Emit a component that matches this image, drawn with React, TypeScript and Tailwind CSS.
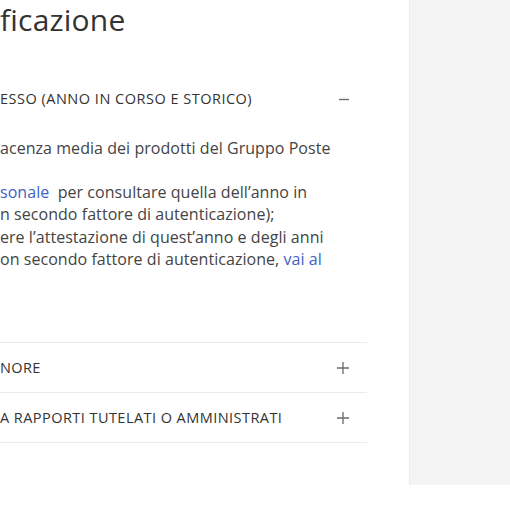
const font = { fontFamily: '"Open Sans", "Liberation Sans", sans-serif' };

function Minus() {
  return (
    <svg width="12" height="12" viewBox="0 0 12 12" className="shrink-0">
      <path d="M1 6.5h10" stroke="#6b6b6b" strokeWidth="1.4" />
    </svg>
  );
}

function Plus() {
  return (
    <svg width="14" height="14" viewBox="0 0 14 14" className="shrink-0">
      <path d="M1 7h12M7 1v12" stroke="#6b6b6b" strokeWidth="1.3" />
    </svg>
  );
}

export default function App() {
  return (
    <div className="flex w-[510px] h-[510px] bg-white overflow-hidden" style={font}>
      <div className="w-[409px] shrink-0 pr-[42px]">
        <h1 className="text-[30px] leading-[40px] text-[#333] font-normal tracking-[0.2px]">ficazione</h1>

        <div className="mt-[34px]">
          <div className="flex items-center justify-between h-[50px] pr-[17px]">
            <span className="text-[14.5px] text-[#333] tracking-[0.5px]">ESSO (ANNO IN CORSO E STORICO)</span>
            <Minus />
          </div>
          <div className="text-[16px] leading-[22.6px] text-[#444] tracking-[0.05px] pt-[13px] h-[218px]">
            <p>acenza media dei prodotti del Gruppo Poste</p>
            <p className="mt-[21px]">
              <span className="text-[#3f62c4]">sonale</span>&nbsp; per consultare quella dell’anno in
            </p>
            <p>n secondo fattore di autenticazione);</p>
            <p>ere l’attestazione di quest’anno e degli anni</p>
            <p>
              on secondo fattore di autenticazione, <span className="text-[#3f62c4]">vai al</span>
            </p>
          </div>
          <div className="flex items-center justify-between h-[50px] pr-[17px] border-t border-[#ebebeb]">
            <span className="text-[14.5px] text-[#333] tracking-[0.4px]">NORE</span>
            <Plus />
          </div>
          <div className="flex items-center justify-between h-[50px] pr-[17px] border-t border-[#ebebeb]">
            <span className="text-[14.5px] text-[#333] tracking-[0.45px]">A RAPPORTI TUTELATI O AMMINISTRATI</span>
            <Plus />
          </div>
          <div className="border-t border-[#ebebeb]" />
        </div>
      </div>
      <div className="w-[101px] h-[485px] bg-[#f4f4f4] border-l border-[#ebebeb]" />
    </div>
  );
}
